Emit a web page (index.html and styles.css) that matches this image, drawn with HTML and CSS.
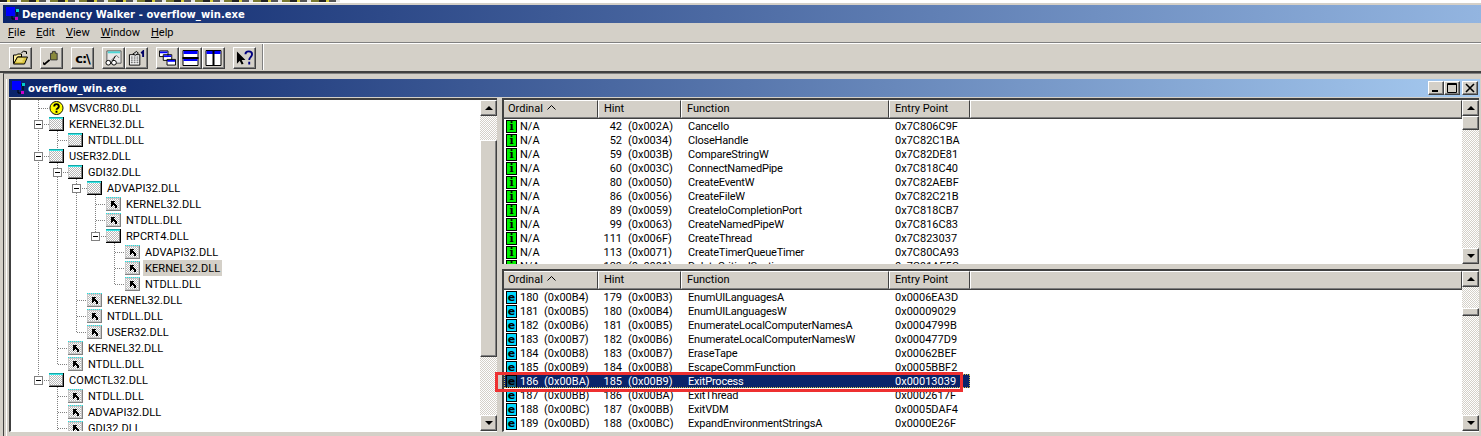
FILE: index.html
```html
<!DOCTYPE html>
<html lang="en">
<head>
  <meta charset="UTF-8">
  <title>Dependency Walker - overflow_win.exe</title>
  <link rel="stylesheet" href="styles.css">
</head>
<body>
<svg class="defs" width="0" height="0">
  <defs>
    <pattern id="dith" width="2" height="2" patternUnits="userSpaceOnUse">
      <rect width="2" height="2" fill="#fff"/>
      <rect width="1" height="1" fill="#b8b8b8"/>
      <rect x="1" y="1" width="1" height="1" fill="#b8b8b8"/>
    </pattern>
    <symbol id="mod" viewBox="0 0 15 14">
      <rect width="15" height="14" fill="url(#dith)"/>
      <path d="M0 0h15v1H0z" fill="#14a8a8"/>
      <path d="M0 1h14v1H0z" fill="#3ae6e6"/>
      <path d="M0 2h1v12H0z" fill="#c8c8c8"/>
      <path d="M14 0h1v14H0v-1h14z" fill="#000"/>
      <path d="M13 2h1v11H1v-1h12z" fill="#808080"/>
    </symbol>
    <symbol id="imp" viewBox="0 0 15 14">
      <rect width="15" height="14" fill="#c8c8c8"/>
      <path d="M0 .5h15" stroke="#19e6e6" stroke-dasharray="1 1"/>
      <rect x="1" y="2" width="12" height="10" fill="url(#dith)"/>
      <path d="M14 1h1v13H0v-1h14z" fill="#808080"/>
      <path d="M5 4h4v1H8v1h1v1h1v1h1v3H9V9H8V8H7v1H6v1H5z" fill="#000"/>
    </symbol>
    <symbol id="ask" viewBox="0 0 15 15">
      <circle cx="7.5" cy="7.5" r="7" fill="#ff0" stroke="#000"/>
      <path d="M5 6c0-3.500 5-3.500 5 0 0 2-2.500 2-2.500 3.500M7.500 10.500v2" fill="none" stroke="#000" stroke-width="2"/>
    </symbol>
  </defs>
</svg>

<div class="app">
  <div class="topstrip"><div class="specks"></div></div>

  <div class="titlebar main">
    <svg class="appicon" viewBox="0 0 14 14"><path d="M0 0h9v9H0z" fill="#00f"/><path d="M9 4h2v5M6 9v3h4" fill="none" stroke="#000"/><path d="M9 10h3v3H9z" fill="#c0c"/><path d="M10 2h3v3h-3z" fill="#0cc"/></svg>
    <span>Dependency Walker - overflow_win.exe</span>
  </div>

  <div class="menubar">
    <span><u>F</u>ile</span>
    <span><u>E</u>dit</span>
    <span><u>V</u>iew</span>
    <span><u>W</u>indow</span>
    <span><u>H</u>elp</span>
  </div>

  <div class="toolbar">
    <div class="tbgroup">
      <button class="tb"><svg viewBox="0 0 16 16"><path d="M9 3l2-2 3 1M13 1l1 1v2" fill="none" stroke="#000"/><path d="M1 5h3l1-1h4v3H5L2 13H1z" fill="#ffef9c" stroke="#000"/><path d="M5 7h10l-3 7H1z" fill="#dcc640" stroke="#000"/><path d="M5 9h6M4 11h6" stroke="#fff6b0"/></svg></button>
    </div>
    <div class="tbgroup">
      <button class="tb"><svg viewBox="0 0 18 16"><path d="M8 3h2V1h3v2h2v7H8z" fill="#8a8a3c" stroke="#333"/><path d="M1 15l6-5" stroke="#000" stroke-width="2"/><path d="M3 15H0v-3z" fill="#000"/></svg></button>
    </div>
    <div class="tbgroup">
      <button class="tb tbtext">c:\</button>
    </div>
    <div class="tbgroup">
      <button class="tb"><svg viewBox="0 0 18 16"><path d="M2 .5h15v13H2z" fill="#e8e8e8" stroke="#555"/><path d="M3 1h13v2H3z" fill="#4bd6d6"/><path d="M6 11l6-6 3 3" fill="none" stroke="#777"/><circle cx="3.500" cy="13" r="2.500" fill="#fff" stroke="#000"/><circle cx="9.500" cy="13" r="2.500" fill="#fff" stroke="#000"/><path d="M6 13h1M8 11l3-5" stroke="#000"/></svg></button>
      <button class="tb"><svg viewBox="0 0 18 16"><path d="M1.500 4.500h11v11h-11z" fill="#fff" stroke="#000"/><path d="M3 7h8M3 9h8M3 11h8M3 13h8" stroke="#444" stroke-dasharray="2 1"/><path d="M5 4l4-3 2 2-3 2z" fill="#ccc" stroke="#000"/><path d="M14 3l2-2v6" fill="none" stroke="#006" stroke-width="2"/></svg></button>
    </div>
    <div class="tbgroup">
      <button class="tb"><svg viewBox="0 0 18 16"><path d="M.5.500h9v6h-9zM4.500 4.500h9v6h-9zM8.500 9.500h9v6h-9z" fill="#fff" stroke="#000"/><path d="M1 1h8v2H1zM5 5h8v2H5zM9 10h8v2H9z" fill="#00f"/></svg></button>
      <button class="tb"><svg viewBox="0 0 16 16"><path d="M.5.500h15v15H.5z" fill="#fff" stroke="#000"/><path d="M1 1h14v3H1zM1 9h14v2H1z" fill="#00f"/><path d="M0 8h16" stroke="#000" stroke-width="2"/></svg></button>
      <button class="tb"><svg viewBox="0 0 16 16"><path d="M.5.500h15v15H.5z" fill="#fff" stroke="#000"/><path d="M1 1h14v3H1z" fill="#00f"/><path d="M8 0v16" stroke="#000" stroke-width="2"/></svg></button>
    </div>
    <div class="tbgroup">
      <button class="tb"><svg viewBox="0 0 18 16"><path d="M1 1v13l3-3 2 4 2-1-2-4h4z" fill="#000"/><path d="M10 4c0-4 7-4 7 0 0 3-3 3-3 6M14 12v3" fill="none" stroke="#000080" stroke-width="2"/></svg></button>
    </div>
    <div class="tbsep"></div>
  </div>

  <div class="mdi">
    <div class="child">
      <div class="titlebar sub">
        <svg class="appicon" viewBox="0 0 14 14"><path d="M0 0h9v9H0z" fill="#00f"/><path d="M9 4h2v5M6 9v3h4" fill="none" stroke="#000"/><path d="M9 10h3v3H9z" fill="#c0c"/><path d="M10 2h3v3h-3z" fill="#0cc"/></svg>
        <span class="subtitle">overflow_win.exe</span>
        <div class="winbtns">
          <button class="wb"><svg viewBox="0 0 14 12"><path d="M3 8h6v2H3z"/></svg></button>
          <button class="wb"><svg viewBox="0 0 14 12"><path d="M2.500 1.500h9v9h-9zM2 2.500h10" fill="none" stroke="#000"/></svg></button>
          <button class="wb close"><svg viewBox="0 0 14 12"><path d="M3 2l8 8M11 2l-8 8" stroke="#000" stroke-width="1.600"/></svg></button>
        </div>
      </div>

      <div class="panes">
        <div class="treepane">
          <div class="tree">
            <svg class="treelines" width="469" height="332" viewBox="11 100 469 332">
              <path d="M38.500 98V375M57.500 129V364M57.500 385V432M76.500 177V332M95.500 193V236M114.500 241V284
                       M39 108.500H49M44 124.500H49M58 140.500H68M44 156.500H49M63 172.500H68M82 188.500H87
                       M96 204.500H106M96 220.500H106M101 236.500H106M115 252.500H125M115 268.500H125M115 284.500H125
                       M77 300.500H87M77 316.500H87M77 332.500H87M58 348.500H68M58 364.500H68M44 380.500H49
                       M58 396.500H68M58 412.500H68M58 428.500H68" fill="none" stroke="#808080" stroke-dasharray="1 1" shape-rendering="crispEdges"/>
            </svg>
            <div class="node d0"><i class="slot"></i><svg class="ni"><use href="#ask"/></svg><span class="lbl">MSVCR80.DLL</span></div>
            <div class="node d0"><i class="slot box"></i><svg class="ni"><use href="#mod"/></svg><span class="lbl">KERNEL32.DLL</span></div>
            <div class="node d1"><i class="slot"></i><svg class="ni"><use href="#mod"/></svg><span class="lbl">NTDLL.DLL</span></div>
            <div class="node d0"><i class="slot box"></i><svg class="ni"><use href="#mod"/></svg><span class="lbl">USER32.DLL</span></div>
            <div class="node d1"><i class="slot box"></i><svg class="ni"><use href="#mod"/></svg><span class="lbl">GDI32.DLL</span></div>
            <div class="node d2"><i class="slot box"></i><svg class="ni"><use href="#mod"/></svg><span class="lbl">ADVAPI32.DLL</span></div>
            <div class="node d3"><i class="slot"></i><svg class="ni"><use href="#imp"/></svg><span class="lbl">KERNEL32.DLL</span></div>
            <div class="node d3"><i class="slot"></i><svg class="ni"><use href="#imp"/></svg><span class="lbl">NTDLL.DLL</span></div>
            <div class="node d3"><i class="slot box"></i><svg class="ni"><use href="#mod"/></svg><span class="lbl">RPCRT4.DLL</span></div>
            <div class="node d4"><i class="slot"></i><svg class="ni"><use href="#imp"/></svg><span class="lbl">ADVAPI32.DLL</span></div>
            <div class="node d4"><i class="slot"></i><svg class="ni"><use href="#imp"/></svg><span class="lbl picked">KERNEL32.DLL</span></div>
            <div class="node d4"><i class="slot"></i><svg class="ni"><use href="#imp"/></svg><span class="lbl">NTDLL.DLL</span></div>
            <div class="node d2"><i class="slot"></i><svg class="ni"><use href="#imp"/></svg><span class="lbl">KERNEL32.DLL</span></div>
            <div class="node d2"><i class="slot"></i><svg class="ni"><use href="#imp"/></svg><span class="lbl">NTDLL.DLL</span></div>
            <div class="node d2"><i class="slot"></i><svg class="ni"><use href="#imp"/></svg><span class="lbl">USER32.DLL</span></div>
            <div class="node d1"><i class="slot"></i><svg class="ni"><use href="#imp"/></svg><span class="lbl">KERNEL32.DLL</span></div>
            <div class="node d1"><i class="slot"></i><svg class="ni"><use href="#imp"/></svg><span class="lbl">NTDLL.DLL</span></div>
            <div class="node d0"><i class="slot box"></i><svg class="ni"><use href="#mod"/></svg><span class="lbl">COMCTL32.DLL</span></div>
            <div class="node d1"><i class="slot"></i><svg class="ni"><use href="#imp"/></svg><span class="lbl">NTDLL.DLL</span></div>
            <div class="node d1"><i class="slot"></i><svg class="ni"><use href="#imp"/></svg><span class="lbl">ADVAPI32.DLL</span></div>
            <div class="node d1"><i class="slot"></i><svg class="ni"><use href="#imp"/></svg><span class="lbl">GDI32.DLL</span></div>
          </div>
          <div class="vscroll">
            <button class="sb up"></button>
            <div class="track t24"></div>
            <div class="thumb tree-thumb"></div>
            <div class="track grow"></div>
            <button class="sb down"></button>
          </div>
        </div>

        <div class="splitter"></div>

        <div class="rightcol">
          <div class="listpane upper">
            <div class="listmain">
              <div class="head">
                <div class="hc c1">Ordinal <svg class="caret" viewBox="0 0 9 5"><path d="M.5 4.500l4-4 4 4" fill="none" stroke="#000"/></svg></div>
                <div class="hc c2">Hint</div>
                <div class="hc c3">Function</div>
                <div class="hc c4">Entry Point</div>
                <div class="hc fill"></div>
              </div>
              <div class="rows">
                <div class="row"><div class="c1"><b class="flag gr">i</b>N/A</div><div class="c2"><span class="n">42</span>(0x002A)</div><div class="c3">CancelIo</div><div class="c4">0x7C806C9F</div></div>
                <div class="row"><div class="c1"><b class="flag gr">i</b>N/A</div><div class="c2"><span class="n">52</span>(0x0034)</div><div class="c3">CloseHandle</div><div class="c4">0x7C82C1BA</div></div>
                <div class="row"><div class="c1"><b class="flag gr">i</b>N/A</div><div class="c2"><span class="n">59</span>(0x003B)</div><div class="c3">CompareStringW</div><div class="c4">0x7C82DE81</div></div>
                <div class="row"><div class="c1"><b class="flag gr">i</b>N/A</div><div class="c2"><span class="n">60</span>(0x003C)</div><div class="c3">ConnectNamedPipe</div><div class="c4">0x7C818C40</div></div>
                <div class="row"><div class="c1"><b class="flag gr">i</b>N/A</div><div class="c2"><span class="n">80</span>(0x0050)</div><div class="c3">CreateEventW</div><div class="c4">0x7C82AEBF</div></div>
                <div class="row"><div class="c1"><b class="flag gr">i</b>N/A</div><div class="c2"><span class="n">86</span>(0x0056)</div><div class="c3">CreateFileW</div><div class="c4">0x7C82C21B</div></div>
                <div class="row"><div class="c1"><b class="flag gr">i</b>N/A</div><div class="c2"><span class="n">89</span>(0x0059)</div><div class="c3">CreateIoCompletionPort</div><div class="c4">0x7C818CB7</div></div>
                <div class="row"><div class="c1"><b class="flag gr">i</b>N/A</div><div class="c2"><span class="n">99</span>(0x0063)</div><div class="c3">CreateNamedPipeW</div><div class="c4">0x7C816C83</div></div>
                <div class="row"><div class="c1"><b class="flag gr">i</b>N/A</div><div class="c2"><span class="n">111</span>(0x006F)</div><div class="c3">CreateThread</div><div class="c4">0x7C823037</div></div>
                <div class="row"><div class="c1"><b class="flag gr">i</b>N/A</div><div class="c2"><span class="n">113</span>(0x0071)</div><div class="c3">CreateTimerQueueTimer</div><div class="c4">0x7C80CA93</div></div>
                <div class="row"><div class="c1"><b class="flag gr">i</b>N/A</div><div class="c2"><span class="n">129</span>(0x0081)</div><div class="c3">DeleteCriticalSection</div><div class="c4">0x7C91AF5C</div></div>
              </div>
            </div>
            <div class="vscroll">
              <button class="sb up"></button>
              <div class="thumb t14"></div>
              <div class="track grow"></div>
              <button class="sb down"></button>
            </div>
          </div>

          <div class="splitter horiz"></div>

          <div class="listpane lower">
            <div class="listmain">
              <div class="head">
                <div class="hc c1">Ordinal <svg class="caret" viewBox="0 0 9 5"><path d="M.5 4.500l4-4 4 4" fill="none" stroke="#000"/></svg></div>
                <div class="hc c2">Hint</div>
                <div class="hc c3">Function</div>
                <div class="hc c4">Entry Point</div>
                <div class="hc fill"></div>
              </div>
              <div class="rows">
                <div class="row"><div class="c1"><b class="flag cy">e</b>180&nbsp; (0x00B4)</div><div class="c2"><span class="n">179</span>(0x00B3)</div><div class="c3">EnumUILanguagesA</div><div class="c4">0x0006EA3D</div></div>
                <div class="row"><div class="c1"><b class="flag cy">e</b>181&nbsp; (0x00B5)</div><div class="c2"><span class="n">180</span>(0x00B4)</div><div class="c3">EnumUILanguagesW</div><div class="c4">0x00009029</div></div>
                <div class="row"><div class="c1"><b class="flag cy">e</b>182&nbsp; (0x00B6)</div><div class="c2"><span class="n">181</span>(0x00B5)</div><div class="c3">EnumerateLocalComputerNamesA</div><div class="c4">0x0004799B</div></div>
                <div class="row"><div class="c1"><b class="flag cy">e</b>183&nbsp; (0x00B7)</div><div class="c2"><span class="n">182</span>(0x00B6)</div><div class="c3">EnumerateLocalComputerNamesW</div><div class="c4">0x000477D9</div></div>
                <div class="row"><div class="c1"><b class="flag cy">e</b>184&nbsp; (0x00B8)</div><div class="c2"><span class="n">183</span>(0x00B7)</div><div class="c3">EraseTape</div><div class="c4">0x00062BEF</div></div>
                <div class="row"><div class="c1"><b class="flag cy">e</b>185&nbsp; (0x00B9)</div><div class="c2"><span class="n">184</span>(0x00B8)</div><div class="c3">EscapeCommFunction</div><div class="c4">0x0005BBF2</div></div>
                <div class="row sel"><div class="c1"><b class="flag cy">e</b>186&nbsp; (0x00BA)</div><div class="c2"><span class="n">185</span>(0x00B9)</div><div class="c3">ExitProcess</div><div class="c4">0x00013039</div></div>
                <div class="row"><div class="c1"><b class="flag cy">e</b>187&nbsp; (0x00BB)</div><div class="c2"><span class="n">186</span>(0x00BA)</div><div class="c3">ExitThread</div><div class="c4">0x0002617F</div></div>
                <div class="row"><div class="c1"><b class="flag cy">e</b>188&nbsp; (0x00BC)</div><div class="c2"><span class="n">187</span>(0x00BB)</div><div class="c3">ExitVDM</div><div class="c4">0x0005DAF4</div></div>
                <div class="row"><div class="c1"><b class="flag cy">e</b>189&nbsp; (0x00BD)</div><div class="c2"><span class="n">188</span>(0x00BC)</div><div class="c3">ExpandEnvironmentStringsA</div><div class="c4">0x0000E26F</div></div>
                <div class="row"><div class="c1"><b class="flag cy">e</b>190&nbsp; (0x00BE)</div><div class="c2"><span class="n">189</span>(0x00BD)</div><div class="c3">ExpandEnvironmentStringsW</div><div class="c4">0x0000E2A0</div></div>
              </div>
            </div>
            <div class="vscroll">
              <button class="sb up"></button>
              <div class="track t21"></div>
              <div class="thumb t8"></div>
              <div class="track grow"></div>
              <button class="sb down"></button>
            </div>
            <div class="redbox"></div>
          </div>
        </div>
      </div>
    </div>
  </div>
</div>
</body>
</html>
```

FILE: styles.css
```css
* {
  box-sizing: border-box;
}
html, body {
  margin: 0;
  height: 100%;
  overflow: hidden;
}
body {
  font-family: Roboto, "Liberation Sans", sans-serif;
  font-size: 11px;
  color: #000;
  background: #d4d0c8;
}
button {
  padding: 0;
  margin: 0;
  font: inherit;
  background: #d4d0c8;
  border: 1px solid;
  border-color: #fff #404040 #404040 #fff;
  box-shadow: inset -1px -1px 0 #808080;
}
.defs {
  display: block;
  height: 0;
}

.app {
  width: 1481px;
  height: 436px;
  overflow: hidden;
  display: flex;
  flex-direction: column;
}
.topstrip {
  height: 5px;
  flex: none;
  border-bottom: 2px solid #d4d0c8;
  background: #fff;
}
.specks {
  width: 340px;
  height: 2px;
  background: repeating-linear-gradient(90deg, #222 0 7px, #d8d040 7px 10px, #555 10px 17px, #e8e8e8 17px 21px, #7a7a30 21px 29px);
}

/* title bars */
.titlebar {
  display: flex;
  align-items: center;
  flex: none;
  height: 18px;
  color: #fff;
  font-family: "DejaVu Sans", sans-serif;
  font-weight: bold;
  font-size: 10px;
  letter-spacing: .06px;
}
.titlebar.main {
  margin-left: 3px;
  padding-left: 3px;
  background: linear-gradient(90deg, #0a246a, #93b5e0);
}
.titlebar.sub {
  padding-left: 3px;
  background: linear-gradient(90deg, #0a246a, #a6caf0);
}
.appicon {
  width: 14px;
  height: 14px;
  flex: none;
  margin-right: 2px;
}
.winbtns {
  margin-left: auto;
  display: flex;
  padding-right: 2px;
}
.wb {
  width: 16px;
  height: 14px;
  display: block;
}
.wb svg {
  display: block;
  width: 14px;
  height: 12px;
}
.wb.close {
  margin-left: 2px;
}

/* menu */
.menubar {
  display: flex;
  align-items: center;
  flex: none;
  height: 20px;
  padding-left: 3px;
  border-bottom: 1px solid #808080;
}
.menubar span {
  padding: 0 5px;
  margin-right: 1px;
}

/* toolbar */
.toolbar {
  display: flex;
  align-items: flex-start;
  gap: 8px;
  flex: none;
  height: 30px;
  padding: 3px 0 0 9px;
  border-top: 1px solid #fff;
  border-bottom: 2px solid #404040;
}
.tbgroup {
  display: flex;
}
.tb {
  display: flex;
  align-items: center;
  justify-content: center;
  width: 23px;
  height: 22px;
}
.tb svg {
  width: 17px;
  height: 16px;
}
.tbtext {
  font-family: "DejaVu Sans", sans-serif;
  font-weight: bold;
  font-size: 13px;
  letter-spacing: -1px;
}
.tbsep {
  width: 2px;
  height: 26px;
  margin: -3px 0 0 -2px;
  background: linear-gradient(90deg, #808080 50%, #fff 50%);
}

/* mdi area */
.mdi {
  flex: 1;
  min-height: 0;
  margin-left: 3px;
  padding: 5px 0 0 2px;
  border-left: 1px solid #404040;
  border-top: 1px solid #808080;
}
.child {
  height: 100%;
  padding: 0 1px 0 2px;
  border-left: 1px solid #fff;
  display: flex;
  flex-direction: column;
}
.panes {
  flex: 1;
  min-height: 0;
  display: flex;
  margin-top: 1px;
  padding-bottom: 4px;
}
.splitter {
  width: 5px;
  flex: none;
}
.splitter.horiz {
  width: auto;
  height: 5px;
}

/* dependency tree */
.treepane {
  width: 488px;
  flex: none;
  display: flex;
  border-top: 2px solid #404040;
  border-left: 2px solid #404040;
  border-bottom: 1px solid #fff;
}
.tree {
  flex: 1;
  min-width: 0;
  position: relative;
  overflow: hidden;
  background: #fff;
}
.treelines {
  position: absolute;
  left: 0;
  top: 0;
}
.node {
  position: relative;
  display: flex;
  align-items: center;
  height: 16px;
}
.d0 { padding-left: 23px; }
.d1 { padding-left: 42px; }
.d2 { padding-left: 61px; }
.d3 { padding-left: 80px; }
.d4 { padding-left: 99px; }
.slot {
  display: block;
  width: 15px;
  height: 9px;
  flex: none;
}
.slot.box {
  width: 9px;
  margin-right: 6px;
  background: linear-gradient(#000, #000) center / 5px 1px no-repeat, #fff;
  border: 1px solid #808080;
}
.ni {
  width: 15px;
  height: 14px;
  flex: none;
}
.lbl {
  margin-left: 3px;
  padding: 1px 2px 0;
  height: 16px;
  line-height: 16px;
  letter-spacing: .08px;
}
.lbl.picked {
  background: #d4d0c8;
}

/* scroll bars */
.vscroll {
  width: 17px;
  flex: none;
  display: flex;
  flex-direction: column;
}
.sb {
  display: block;
  width: 17px;
  height: 16px;
  flex: none;
  position: relative;
}
.sb::after {
  content: "";
  position: absolute;
  left: 4px;
  border-left: 4px solid transparent;
  border-right: 4px solid transparent;
}
.sb.up::after {
  top: 5px;
  border-bottom: 4px solid #000;
}
.sb.down::after {
  top: 5px;
  border-top: 4px solid #000;
}
.track {
  flex: none;
  background: repeating-conic-gradient(#d4d0c8 0 25%, #fff 0 50%) 0 0 / 2px 2px;
}
.track.grow {
  flex: 1;
}
.t24 { height: 24px; }
.t21 { height: 21px; }
.thumb {
  flex: none;
  background: #d4d0c8;
  border: 1px solid;
  border-color: #fff #404040 #404040 #fff;
  box-shadow: inset -1px -1px 0 #808080;
}
.tree-thumb { height: 217px; }
.t14 { height: 14px; }
.t8 { height: 8px; }

/* right hand lists */
.rightcol {
  width: 977px;
  flex: none;
  display: flex;
  flex-direction: column;
}
.listpane {
  position: relative;
  display: flex;
  border-top: 2px solid #404040;
  border-left: 2px solid #404040;
  background: #fff;
}
.listpane.upper {
  height: 166px;
}
.listpane.lower {
  flex: 1;
  min-height: 0;
  border-bottom: 1px solid #fff;
}
.listmain {
  flex: 1;
  min-width: 0;
  overflow: hidden;
}
.head {
  display: flex;
  height: 19px;
  margin-left: -1px;
  background: #d4d0c8;
  border-bottom: 1px solid #404040;
}
.hc {
  display: flex;
  align-items: center;
  height: 18px;
  padding-left: 5px;
  padding-bottom: 1px;
  border: 1px solid;
  border-color: #fff #404040 #808080 #fff;
}
.head .c1 { width: 95px; padding-left: 4px; }
.head .c2 { width: 83px; }
.head .c3 { width: 208px; }
.head .c4 { width: 81px; }
.hc.fill {
  flex: 1;
}
.caret {
  width: 9px;
  height: 5px;
  margin: 0 0 3px 4px;
}
.rows {
  height: 400px;
}
.row {
  display: flex;
  width: 466px;
  height: 14px;
  line-height: 15px;
  white-space: pre;
}
.row .c1 {
  width: 94px;
  padding-left: 2px;
  display: flex;
  align-items: center;
}
.row .c2 {
  width: 84px;
  display: flex;
}
.n {
  width: 24px;
  margin-right: 6px;
  text-align: right;
}
.row .c3 {
  width: 208px;
  padding-left: 6px;
  letter-spacing: -.2px;
}
.row .c4 {
  width: 78px;
  padding-left: 5px;
}
.row.sel {
  color: #fff;
  background: #0a246a;
  outline: 1px dotted #d4c050;
  outline-offset: -1px;
}
.flag {
  display: block;
  flex: none;
  width: 11px;
  height: 13px;
  margin-right: 3px;
  border: 1px solid #000;
  color: #000;
  font-family: "DejaVu Serif", "Liberation Serif", serif;
  font-size: 11px;
  line-height: 11px;
  text-align: center;
}
.flag.gr {
  background: #00f000;
}
.flag.cy {
  background: #00d8ff;
  font-family: "DejaVu Sans", sans-serif;
}
.row.sel .flag {
  background: #0a5a80;
}
.redbox {
  position: absolute;
  left: -9px;
  top: 101px;
  width: 468px;
  height: 20px;
  border: 3px solid #ee3030;
}
```
